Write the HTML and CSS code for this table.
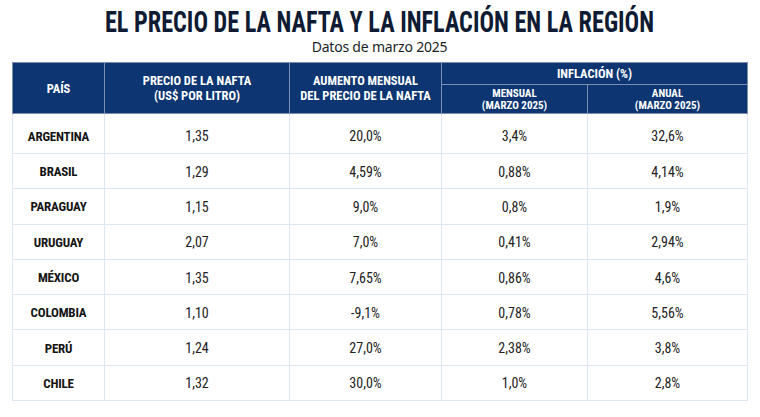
FILE: index.html
```html
<!DOCTYPE html>
<html lang="es">
<head>
<meta charset="utf-8">
<link rel="stylesheet" href="styles.css">
</head>
<body>
<div class="page">
  <h1 class="title">EL PRECIO DE LA NAFTA Y LA INFLACIÓN EN LA REGIÓN</h1>
  <p class="subtitle">Datos de marzo 2025</p>
  <table class="data">
    <colgroup>
      <col class="c1"><col class="c2"><col class="c3"><col class="c4"><col class="c5">
    </colgroup>
    <thead>
      <tr class="h1row">
        <th rowspan="2">PAÍS</th>
        <th rowspan="2">PRECIO DE LA NAFTA<br>(US$ POR LITRO)</th>
        <th rowspan="2">AUMENTO MENSUAL<br>DEL PRECIO DE LA NAFTA</th>
        <th colspan="2" class="group">INFLACIÓN (%)</th>
      </tr>
      <tr class="h2row">
        <th class="sub">MENSUAL<br>(MARZO 2025)</th>
        <th class="sub">ANUAL<br>(MARZO 2025)</th>
      </tr>
    </thead>
    <tbody>
      <tr class="first"><td class="country">ARGENTINA</td><td>1,35</td><td>20,0%</td><td>3,4%</td><td>32,6%</td></tr>
      <tr><td class="country">BRASIL</td><td>1,29</td><td>4,59%</td><td>0,88%</td><td>4,14%</td></tr>
      <tr><td class="country">PARAGUAY</td><td>1,15</td><td>9,0%</td><td>0,8%</td><td>1,9%</td></tr>
      <tr><td class="country">URUGUAY</td><td>2,07</td><td>7,0%</td><td>0,41%</td><td>2,94%</td></tr>
      <tr><td class="country">MÉXICO</td><td>1,35</td><td>7,65%</td><td>0,86%</td><td>4,6%</td></tr>
      <tr><td class="country">COLOMBIA</td><td>1,10</td><td>-9,1%</td><td>0,78%</td><td>5,56%</td></tr>
      <tr><td class="country">PERÚ</td><td>1,24</td><td>27,0%</td><td>2,38%</td><td>3,8%</td></tr>
      <tr><td class="country">CHILE</td><td>1,32</td><td>30,0%</td><td>1,0%</td><td>2,8%</td></tr>
    </tbody>
  </table>
</div>
</body>
</html>
```
FILE: styles.css
```css
html, body {
  margin: 0;
  padding: 0;
  background: #ffffff;
}
.page {
  width: 760px;
  height: 417px;
  padding: 7px 13px 0 12px;
  box-sizing: border-box;
  font-family: "Roboto", "Liberation Sans", sans-serif;
  font-stretch: 75%;
  overflow: hidden;
}
.title {
  margin: 0;
  text-align: center;
  font-size: 29px;
  line-height: 31px;
  font-weight: 700;
  color: #0f1b33;
  white-space: nowrap;
  transform: scaleX(0.835);
}
.subtitle {
  margin: 0 0 6px;
  text-align: center;
  font-family: "Noto Sans", "Open Sans", sans-serif;
  font-stretch: normal;
  font-size: 14px;
  line-height: 18px;
  letter-spacing: -0.2px;
  color: #1b1f2a;
}
.data {
  width: 735px;
  border-collapse: collapse;
  table-layout: fixed;
}
.c1 { width: 92px; }
.c2 { width: 185px; }
.c3 { width: 152px; }
.c4 { width: 146px; }
.c5 { width: 160px; }
.data th {
  background: #0c3571;
  color: #ffffff;
  font-weight: 700;
  font-size: 12.5px;
  line-height: 15px;
  border: 1px solid #7d8fb0;
  padding: 0;
  text-align: center;
}
.h1row th { height: 21px; }
.h2row th { height: 27px; }
.data th.sub {
  font-size: 11px;
  line-height: 11.5px;
  padding-top: 1px;
}
.data td {
  height: 35.3px;
  padding: 1px 0 0;
  box-sizing: border-box;
  text-align: center;
  font-size: 14px;
  color: #222222;
  border: 1px solid #dde7f3;
}
.data tr.first td {
  height: 40px;
  padding-top: 5px;
}
.data td.country {
  font-weight: 700;
  font-size: 13px;
  letter-spacing: -0.2px;
  color: #151515;
}
```
